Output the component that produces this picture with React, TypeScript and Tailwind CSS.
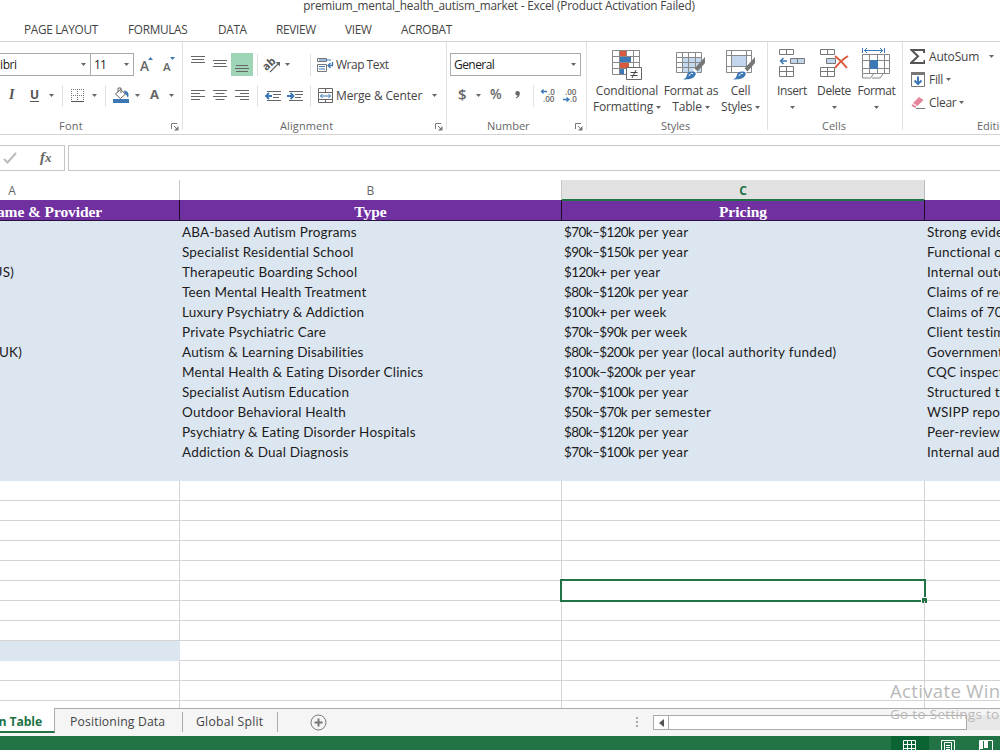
import type { ReactNode } from "react";

type Row = { provider: string; type: string; pricing: string; per: string; evidence: string };

const rows: Row[] = [
  { provider: "", type: "ABA-based Autism Programs", pricing: "$70k–$120k", per: "per year", evidence: "Strong evidence base" },
  { provider: "", type: "Specialist Residential School", pricing: "$90k–$150k", per: "per year", evidence: "Functional outcomes" },
  { provider: "(US)", type: "Therapeutic Boarding School", pricing: "$120k+", per: "per year", evidence: "Internal outcomes" },
  { provider: "", type: "Teen Mental Health Treatment", pricing: "$80k–$120k", per: "per year", evidence: "Claims of recovery" },
  { provider: "", type: "Luxury Psychiatry & Addiction", pricing: "$100k+", per: "per week", evidence: "Claims of 70% success" },
  { provider: "", type: "Private Psychiatric Care", pricing: "$70k–$90k", per: "per week", evidence: "Client testimonials" },
  { provider: "(UK)", type: "Autism & Learning Disabilities", pricing: "$80k–$200k", per: "per year (local authority funded)", evidence: "Government reports" },
  { provider: "", type: "Mental Health & Eating Disorder Clinics", pricing: "$100k–$200k", per: "per year", evidence: "CQC inspections" },
  { provider: "", type: "Specialist Autism Education", pricing: "$70k–$100k", per: "per year", evidence: "Structured teaching" },
  { provider: "", type: "Outdoor Behavioral Health", pricing: "$50k–$70k", per: "per semester", evidence: "WSIPP reports" },
  { provider: "", type: "Psychiatry & Eating Disorder Hospitals", pricing: "$80k–$120k", per: "per year", evidence: "Peer-reviewed" },
  { provider: "", type: "Addiction & Dual Diagnosis", pricing: "$70k–$100k", per: "per year", evidence: "Internal audits" },
];

const blankRows = Array.from({ length: 12 }, (_, i) => i);

const gridCols = "grid grid-cols-[180px_382px_363px_75px]";

function Caret({ className = "" }: { className?: string }) {
  return (
    <svg width="5" height="3" viewBox="0 0 5 3" className={`shrink-0 ${className}`}>
      <path d="M0 0h5L2.5 3z" fill="#666" />
    </svg>
  );
}

function Launcher({ className = "" }: { className?: string }) {
  return (
    <svg width="8" height="8" viewBox="0 0 8 8" className={`shrink-0 ${className}`} fill="none" stroke="#777">
      <path d="M.5 6V.5H6M3 3l3 3" />
      <path d="M7.5 3v4.5H3z" fill="#777" stroke="none" />
    </svg>
  );
}

function Lines({ widths, align = "left", y }: { widths: number[]; align?: "left" | "center" | "right"; y: number }) {
  return (
    <svg width="14" height="23" viewBox="0 0 14 23" className="shrink-0" stroke="#666">
      {widths.map((w, i) => {
        const x = align === "left" ? 0 : align === "center" ? (14 - w) / 2 : 14 - w;
        return <path key={i} d={`M${x} ${y + i * 3 + 0.5}h${w}`} />;
      })}
    </svg>
  );
}

function Separator({ className = "" }: { className?: string }) {
  return <span className={`h-[22px] w-px shrink-0 bg-[#e1e1e1] ${className}`} />;
}

function Indent({ back = false }: { back?: boolean }) {
  return (
    <svg width="17" height="12" viewBox="0 0 17 12" className="shrink-0" fill="none">
      <path d="M2 1.5h14M8 4.5h8M8 7.5h6M2 10.5h14" stroke="#666" />
      <path d={back ? "M1 6h6M4 3L1 6l3 3" : "M0 6h6M3.5 3l3 3-3 3"} stroke="#3b78b5" strokeWidth="1.8" />
    </svg>
  );
}

function Group({ width, label, labelClass = "", launcher = false, children }: { width: string; label: string; labelClass?: string; launcher?: boolean; children: ReactNode }) {
  return (
    <section className={`flex h-[92px] shrink-0 flex-col ${width}`}>
      <div className="flex h-[88px] flex-col border-r border-[#e1e1e1]">
        <div className="h-[78px] shrink-0">{children}</div>
        <div className="flex h-3 shrink-0 items-center text-[11px] text-[#666]">
          <span className={`shrink-0 whitespace-nowrap ${labelClass}`}>{label}</span>
          {launcher && <Launcher className="mt-px mr-[3px] ml-auto" />}
        </div>
      </div>
    </section>
  );
}

function FontGroup() {
  return (
    <Group width="w-[183px]" label="Font" labelClass="ml-[59px] tracking-[0.2px]" launcher>
      <div className="mt-[11px] flex h-[23px] items-center text-[12px]">
        <div className="flex h-[23px] w-[91px] items-center border border-l-0 border-[#ababab] text-[#222]">
          <span className="tracking-[-0.4px]">ibri</span>
          <Caret className="mr-1 ml-auto" />
        </div>
        <div className="flex h-[23px] w-[43px] items-center border border-l-0 border-[#ababab] pl-[3px] text-[#222]">
          <span className="tracking-[-0.8px]">11</span>
          <Caret className="mr-1 ml-auto" />
        </div>
        <svg width="36" height="20" viewBox="0 0 36 20" className="ml-1.5">
          <text x="0" y="16" fontSize="13.5" fontWeight="600" fill="#666">A</text>
          <path d="M8 5l2.5-3L13 5z" fill="#3b78b5" />
          <text x="23" y="16" fontSize="11.5" fontWeight="600" fill="#666">A</text>
          <path d="M30 2h5l-2.5 3z" fill="#3b78b5" />
        </svg>
      </div>
      <div className="mt-2 flex h-[23px] items-center text-[#555]">
        <span className="-mt-0.5 ml-[9px] w-[9px] font-['Liberation_Serif'] text-[14px] font-bold italic">I</span>
        <span className="-mt-0.5 ml-3 w-[9px] text-[12px] font-bold underline underline-offset-2">U</span>
        <Caret className="ml-2.5" />
        <Separator className="ml-2" />
        <svg width="13" height="13" viewBox="0 0 13 13" className="ml-2" fill="none" stroke="#777">
          <path d="M0 .5h13M0 6.5h13M.5 0v13M6.5 0v13M12.5 0v13" strokeDasharray="1 1" />
          <path d="M0 12.5h13" stroke="#555" />
        </svg>
        <Caret className="ml-2" />
        <Separator className="ml-2" />
        <svg width="17" height="17" viewBox="0 0 17 17" className="ml-[7px]" fill="none">
          <path d="M2.5 7l5-4.5 5 4.5-5 4.5z" fill="#fff" stroke="#666" />
          <path d="M5 5V1h3v5" stroke="#666" />
          <path d="M11 3.5c4 .5 5.5 3 4 7.5C14 9 13 7.5 11.5 6z" fill="#3b78b5" />
          <path d="M0 12h16v4H0z" fill="#3b78b5" />
        </svg>
        <Caret className="ml-[5px]" />
        <span className="-mt-0.5 ml-[10px] w-[11px] text-[13px] font-bold text-[#666]">A</span>
        <Caret className="ml-2" />
      </div>
    </Group>
  );
}

function AlignmentGroup() {
  return (
    <Group width="w-[264px]" label="Alignment" labelClass="ml-[97px] tracking-[0.1px]" launcher>
      <div className="mt-[11px] flex h-[23px] items-center">
        <span className="ml-2"><Lines widths={[14, 12, 14]} align="center" y={3} /></span>
        <span className="ml-2"><Lines widths={[14, 12, 14]} align="center" y={7} /></span>
        <span className="ml-1 flex h-[23px] w-[22px] items-center justify-center bg-[#9fd5b7]">
          <Lines widths={[12, 14, 12]} align="center" y={12} />
        </span>
        <Separator className="ml-1" />
        <svg width="18" height="16" viewBox="0 0 18 16" className="ml-[6px] overflow-visible" fill="none">
          <text x="0" y="12" fontSize="11" fontWeight="700" fill="#555" transform="rotate(-42 4 10)">ab</text>
          <path d="M6 15l9-9" stroke="#666" strokeWidth="1.2" />
          <path d="M11.5 5H16v4.5z" fill="#666" />
        </svg>
        <Caret className="ml-[3px]" />
        <Separator className="ml-[20px]" />
        <svg width="17" height="16" viewBox="0 0 17 16" className="ml-[6px]" fill="none">
          <path d="M.5 1.5h9v3h-9zM.5 7.5h9v7h-9z" stroke="#777" />
          <path d="M2 3h12M2 9.5h6M2 12h6" stroke="#3b78b5" />
          <path d="M15.5 5v3.5H11M13.5 6L11 8.5l2.5 2.5" stroke="#3b78b5" strokeWidth="1.3" />
        </svg>
        <span className="ml-[2px] text-[12px] tracking-[-0.5px] whitespace-nowrap text-[#444]">Wrap Text</span>
      </div>
      <div className="mt-2 flex h-[23px] items-center">
        <span className="ml-2"><Lines widths={[14, 9, 14, 9]} y={6} /></span>
        <span className="ml-2"><Lines widths={[14, 9, 14, 9]} align="center" y={6} /></span>
        <span className="ml-2"><Lines widths={[14, 9, 14, 9]} align="right" y={6} /></span>
        <Separator className="ml-2" />
        <span className="ml-[7px]"><Indent back /></span>
        <span className="ml-[5px]"><Indent /></span>
        <Separator className="ml-[6px]" />
        <svg width="15" height="15" viewBox="0 0 15 15" className="ml-[7px]" fill="none">
          <path d="M.5 .5h14v14H.5zM0 4.5h15M0 11.5h15M7.5 0v4M7.5 12v3" stroke="#666" />
          <path d="M2.5 8h10M4.5 6l-2 2 2 2M10.5 6l2 2-2 2" stroke="#3b78b5" />
        </svg>
        <span className="ml-[3px] text-[12px] tracking-[-0.15px] whitespace-nowrap text-[#444]">Merge &amp; Center</span>
        <Caret className="ml-[10px]" />
      </div>
    </Group>
  );
}

function NumberGroup() {
  return (
    <Group width="w-[140px]" label="Number" labelClass="ml-[40px]" launcher>
      <div className="mt-[11px] ml-[3px] flex h-[23px] w-[131px] items-center border border-[#ababab] pl-[3px] text-[12px] tracking-[-0.55px] text-[#222]">
        General
        <Caret className="mr-1 ml-auto" />
      </div>
      <div className="mt-2 flex h-[23px] items-center font-semibold text-[#666]">
        <span className="-mt-0.5 ml-[11px] w-2 text-[15px]">$</span>
        <Caret className="ml-[10px]" />
        <span className="-mt-0.5 ml-[9px] w-[13px] text-[13.5px]">%</span>
        <svg width="5" height="8" viewBox="0 0 5 8" className="-mt-0.5 ml-3">
          <path d="M2.5 0a2.3 2.3 0 0 1 2.3 2.5C4.8 5 3 7 1 7.5V6.5C2 6 2.5 5.3 2.6 4.5A2.2 2.2 0 0 1 2.5 0z" fill="#666" />
        </svg>
        <Separator className="ml-[13px]" />
        <svg width="38" height="16" viewBox="0 0 38 16" className="ml-[6px]" fill="#666" fontSize="8">
          <text x="8" y="6.5">.0</text>
          <text x="3" y="14">.00</text>
          <text x="25" y="6.500">.00</text>
          <text x="30" y="14">.0</text>
          <path d="M7 3.5H1.5M3.5 1.5l-2 2 2 2M23 11.5h6M26.5 9.5l2.500 2-2.500 2" fill="none" stroke="#3b78b5" strokeWidth="1.3" />
        </svg>
      </div>
    </Group>
  );
}

function BigButton({ width, icon, lines, tracking = "tracking-[-0.15px]" }: { width: string; icon: ReactNode; lines: [string, string]; tracking?: string }) {
  return (
    <button type="button" className={`flex shrink-0 flex-col items-center text-[12px] leading-4 whitespace-nowrap text-[#444] ${tracking} ${width}`}>
      <span className="flex h-[34px] items-end">{icon}</span>
      <span className="mt-[3px]">{lines[0]}</span>
      <span className="flex h-4 items-center gap-[3px]">
        {lines[1] && <span>{lines[1]}</span>}
        <Caret />
      </span>
    </button>
  );
}

function Brush() {
  return (
    <>
      <path d="M29 7v6l-7.5 8.5-3-3z" fill="#777" />
      <path d="M18.5 18.5l3 3-2 2-3-3z" fill="#fff" />
      <path d="M16 21.5c3-.5 4.500 1.500 3.500 3.500-2 4-7 4.500-12.500 4.500 3-1 3.500-3 4-5 .5-1.500 2-3 5-3z" fill="#3b78b5" />
      <path d="M13 26c1-2 2-3 4-2.500" stroke="#fff" fill="none" />
    </>
  );
}

function StylesGroup() {
  return (
    <Group width="w-[181px]" label="Styles" labelClass="ml-[74px] tracking-[-0.1px]">
      <div className="flex pt-[4px]">
        <BigButton
          width="ml-1 w-[72px]"
          lines={["Conditional", "Formatting"]}
          icon={
            <svg width="30" height="30" viewBox="0 0 30 30" fill="none">
              <path d="M.5 .5h27v24H.5zM0 6.5h28M0 12.5h28M0 18.5h28M7.5 0v25M14.5 0v25M21.5 0v25" stroke="#888" />
              <path d="M8 1h6v5H8zM8 13h9v5H8z" fill="#d8593b" />
              <path d="M8 7h11v5H8zM8 19h4v5H8z" fill="#3b78b5" />
              <path d="M14.5 17.5h15v12h-15z" fill="#fff" stroke="#666" />
              <path d="M18.5 22.5h7M18.5 25.5h7M24 20l-4 8" stroke="#444" />
            </svg>
          }
        />
        <BigButton
          width="w-[56px]"
          lines={["Format as", "Table"]}
          icon={
            <svg width="30" height="30" viewBox="0 0 30 30" fill="none">
              <path d="M7 8h18v14H7z" fill="#c3d9ee" />
              <path d="M.5 2.5h25v20H.5zM0 7.5h26M0 12.5h26M0 17.5h26M6.5 2v21M12.5 2v21M19.5 2v21" stroke="#888" />
              <Brush />
            </svg>
          }
        />
        <BigButton
          width="w-[43px]"
          lines={["Cell", "Styles"]}
          tracking="tracking-[-0.25px]"
          icon={
            <svg width="30" height="30" viewBox="0 0 30 30" fill="none">
              <path d="M6 6h15v10H6z" fill="#c3d5ec" />
              <path d="M.5 .5h25v22H.5zM0 5.5h26M0 16.5h26M5.5 0v23M20.5 0v23" stroke="#888" />
              <Brush />
            </svg>
          }
        />
      </div>
    </Group>
  );
}

function CellsGroup() {
  return (
    <Group width="w-[135px]" label="Cells" labelClass="ml-[54px]">
      <div className="flex pt-[4px]">
        <BigButton
          width="ml-[3px] w-[42px]"
          lines={["Insert", ""]}
          tracking="tracking-[-0.4px]"
          icon={
            <svg width="27" height="29" viewBox="0 0 27 29" className="mb-0.5" fill="none">
              <path d="M.5 .5h14v5H.5zM7.5 0v6M.5 17.5h14v10H.5zM0 22.5h15M7.5 17v11" stroke="#777" />
              <path d="M11.5 9.5h14v5h-14zM18.5 9v6" fill="#c3d5ec" stroke="#777" />
              <path d="M8 12H1.5M4.5 9l-3 3 3 3" stroke="#3b78b5" strokeWidth="1.5" />
            </svg>
          }
        />
        <BigButton
          width="w-[42px]"
          lines={["Delete", ""]}
          tracking="tracking-[-0.4px]"
          icon={
            <svg width="29" height="29" viewBox="0 0 29 29" className="mb-0.5" fill="none">
              <path d="M.5 .5h14v5H.5zM7.5 0v6M.5 18.5h14v9H.5zM0 22.5h15M7.5 18v10" stroke="#777" />
              <path d="M6.5 9.5h9v5h-9z" fill="#c3d5ec" stroke="#777" />
              <path d="M15 7c4 3 8 7 12 12M28 7c-5 3-9 7-13 12" stroke="#d8593b" strokeWidth="2" />
            </svg>
          }
        />
        <BigButton
          width="w-[43px]"
          lines={["Format", ""]}
          tracking="tracking-[-0.4px]"
          icon={
            <svg width="29" height="32" viewBox="0 0 29 32" fill="none">
              <path d="M.5 6.5h27v19H.5zM0 12.5h28M0 20.5h28M7.5 6v20M15.5 6v20M22.5 6v20M.5 26v4h8l3-4M10 30h8l3-4" stroke="#888" />
              <path d="M8 12h8v9H8z" fill="#3b78b5" />
              <path d="M.5 0v5M22.5 0v5M2 2.5h19M5 0L2.5 2.5 5 5M18 0l2.5 2.5L18 5" stroke="#3b78b5" />
            </svg>
          }
        />
      </div>
    </Group>
  );
}

function EditingGroup() {
  return (
    <Group width="w-[160px]" label="Editing" labelClass="ml-[74px]">
      <div className="flex flex-col pt-[3px] text-[12px] whitespace-nowrap text-[#444]">
        <div className="flex h-[23px] items-center">
          <svg width="15" height="15" viewBox="0 0 15 15" className="ml-[7px]" fill="none">
            <path d="M14 4V1H1.5L8 7.3 1 14h13.5v-3" stroke="#555" strokeWidth="2" />
          </svg>
          <span className="ml-1 tracking-[-0.2px]">AutoSum</span>
          <Caret className="ml-[10px]" />
        </div>
        <div className="flex h-[23px] items-center">
          <svg width="14" height="15" viewBox="0 0 14 15" className="ml-2" fill="none">
            <path d="M.5 .5h13v14H.5z" stroke="#777" />
            <path d="M0 0h14v3H0z" fill="#777" />
            <path d="M7 4.5v8M3.5 8.5L7 12l3.5-3.5" stroke="#3b78b5" strokeWidth="2" />
          </svg>
          <span className="ml-1 tracking-[-0.3px]">Fill</span>
          <Caret className="ml-[3px]" />
        </div>
        <div className="flex h-[23px] items-center">
          <svg width="14" height="14" viewBox="0 0 14 14" className="ml-2" fill="none">
            <path d="M8 1l4.500 3-6 6L2 7z" fill="#e58599" />
            <path d="M1.5 8l4 2.500L4.500 12 .5 10z" fill="#e58599" />
            <path d="M5 12.5h9" stroke="#777" />
          </svg>
          <span className="ml-1 tracking-[-0.3px]">Clear</span>
          <Caret className="ml-[3px]" />
        </div>
      </div>
    </Group>
  );
}

function Ribbon() {
  return (
    <header>
      <div className="flex h-[18px] justify-center overflow-hidden pr-0.5">
        <p className="-mt-[3px] h-4 text-[11.8px] leading-4 tracking-[-0.2px] whitespace-nowrap text-[#444]">
          premium_mental_health_autism_market - Excel (Product Activation Failed)
        </p>
      </div>
      <nav className="flex h-[23px] items-center text-[11.8px] tracking-[-0.3px] whitespace-nowrap text-[#444]">
        <span className="ml-6 w-[104px]">PAGE LAYOUT</span>
        <span className="w-[90px]">FORMULAS</span>
        <span className="w-[58px]">DATA</span>
        <span className="w-[69px]">REVIEW</span>
        <span className="w-[56px]">VIEW</span>
        <span>ACROBAT</span>
      </nav>
      <div className="flex h-[94px] overflow-hidden border-y border-[#d4d4d4]">
        <FontGroup />
        <AlignmentGroup />
        <NumberGroup />
        <StylesGroup />
        <CellsGroup />
        <EditingGroup />
      </div>
    </header>
  );
}

function FormulaBar() {
  return (
    <div className="flex h-[45px] gap-[3px] pt-[10px]">
      <div className="flex h-[26px] w-[65px] items-center border border-l-0 border-[#c6c6c6]">
        <svg width="14" height="12" viewBox="0 0 14 12" className="ml-[3px]" fill="none">
          <path d="M1 7l3.5 3.5L13 1" stroke="#bbb" strokeWidth="2" />
        </svg>
        <span className="-mt-0.5 ml-[23px] font-['Liberation_Serif'] text-[15px] font-bold text-[#666] italic">
          f<span className="text-[13px]">x</span>
        </span>
      </div>
      <div className="h-[26px] flex-1 border border-r-0 border-[#c6c6c6]" />
    </div>
  );
}

function Sheet() {
  return (
    <main className="relative h-[528px] overflow-hidden">
      <div className={`${gridCols} h-5 text-center text-[12px] leading-[21px] text-[#666]`}>
        <span className="border-r border-[#c8c8c8] pr-[155px] text-center">A</span>
        <span className="border-r border-[#c8c8c8]">B</span>
        <span className="h-[21px] border-r border-b-2 border-r-[#bbb] border-b-[#217346] bg-[#e1e1e1] font-bold text-[#217346]">C</span>
        <span />
      </div>
      <div className={`${gridCols} h-[21px] border-b border-[#2c1140] bg-[#7030a0] text-center font-['Liberation_Serif'] text-[15.5px] leading-[24px] font-bold whitespace-nowrap text-white`}>
        <span className="flex h-5 justify-end border-r border-[#1c0a29] pr-[77px] tracking-[-0.1px]">Program Name &amp; Provider</span>
        <span className="h-5 border-r border-[#1c0a29]">Type</span>
        <span className="h-5 border-r border-[#1c0a29]">Pricing</span>
        <span />
      </div>
      <div className="h-[260px] bg-[#dce6f1] font-['Lato','Open_Sans',sans-serif] text-[13.5px] leading-[22px] tracking-[0.18px] whitespace-nowrap text-[#1c1c1c]">
        {rows.map((row) => (
          <div key={row.type} className={`${gridCols} h-5`}>
            <span className={`flex justify-end ${row.provider === "(UK)" ? "pr-[158px]" : "pr-[166px]"}`}>{row.provider}</span>
            <span className="pl-0.5">{row.type}</span>
            <span className="pl-0.5 tracking-[0.3px]">
              <span className="tracking-[-0.6px]">{row.pricing}</span> {row.per}
            </span>
            <span className="pl-0.5">{row.evidence}</span>
          </div>
        ))}
      </div>
      {blankRows.map((i) => (
        <div key={i} className={`${gridCols} h-5`}>
          <span className={`border-r border-b ${i === 8 ? "border-[#dce6f1] bg-[#dce6f1]" : "border-[#d4d4d4]"}`} />
          <span className="border-r border-b border-[#d4d4d4]" />
          <span className="relative border-r border-b border-[#d4d4d4]">
            {i === 5 && (
              <span className="absolute -top-0.5 -right-0.5 -bottom-0.5 -left-0.5 border-2 border-[#217346]">
                <span className="absolute -right-[3px] -bottom-[3px] h-1.5 w-1.5 border-t border-l border-white bg-[#217346]" />
              </span>
            )}
          </span>
          <span className="border-b border-[#d4d4d4]" />
        </div>
      ))}
    </main>
  );
}

function SheetTabs() {
  return (
    <div className="flex h-7 border-t border-[#ababab] bg-[#f5f5f5] text-[12.2px] whitespace-nowrap text-[#444]">
      <div className="-mt-px flex h-[25px] w-[55px] items-center justify-end overflow-hidden border-r border-b-2 border-r-[#ababab] border-b-[#217346] bg-white pt-[5px] pr-3 font-bold tracking-[-0.1px] text-[#217346]">
        <span>Comparison Table</span>
      </div>
      <span className="mt-[3px] h-5 w-[128px] border-r border-[#ababab] pl-[15px] leading-5 tracking-[0.15px]">Positioning Data</span>
      <span className="mt-[3px] h-5 w-[95px] border-r border-[#ababab] pl-[13px] leading-5 tracking-[0.25px]">Global Split</span>
      <svg width="17" height="17" viewBox="0 0 17 17" className="mt-[5px] ml-8" fill="none" stroke="#777">
        <circle cx="8.5" cy="8.5" r="7.5" />
        <path d="M8.5 4.5v8M4.5 8.5h8" strokeWidth="2" />
      </svg>
      <svg width="3" height="12" viewBox="0 0 3 12" className="mt-2 ml-[309px]" fill="#aaa">
        <path d="M0 0h2v2H0zM0 4h2v2H0zM0 8h2v2H0z" />
      </svg>
      <div className="mt-1.5 ml-[14px] flex h-[15px] flex-1 bg-[#e8e8e8]">
        <span className="flex w-4 items-center justify-center border border-[#ababab] bg-white">
          <svg width="5" height="8" viewBox="0 0 5 8"><path d="M5 0v8L0 4z" fill="#555" /></svg>
        </span>
        <span className="w-[298px] border border-l-0 border-[#ababab] bg-white" />
      </div>
    </div>
  );
}

function StatusBar() {
  return (
    <footer className="flex h-[14px] overflow-hidden bg-[#217346]">
      <span className="ml-[891px] flex w-[38px] justify-center bg-[#0a6332] pt-1 pr-0.5">
        <svg width="13" height="13" viewBox="0 0 13 13" className="shrink-0" fill="none" stroke="#fff">
          <path d="M.5 .5h12v12H.5zM4.5 0v13M8.5 0v13M0 4.5h13M0 8.5h13" />
        </svg>
      </span>
      <svg width="14" height="13" viewBox="0 0 14 13" className="mt-1 ml-3 shrink-0" fill="none" stroke="#fff">
        <path d="M.5 14V.5h13V14M3.5 14V2.5h7V14M5 5.5h4M5 7.5h4M5 9.5h4" />
      </svg>
      <svg width="14" height="13" viewBox="0 0 14 13" className="mt-1 ml-6 shrink-0" fill="none" stroke="#fff">
        <path d="M.5 14V.5h13V14" />
        <path d="M1 1h3v8H1zM5 1h4v7H5z" fill="#fff" stroke="none" />
      </svg>
    </footer>
  );
}

export default function App() {
  return (
    <div className="relative h-[750px] w-[1000px] overflow-hidden bg-white font-['Open_Sans','Noto_Sans',sans-serif]">
      <Ribbon />
      <FormulaBar />
      <Sheet />
      <SheetTabs />
      <StatusBar />
      <div className="pointer-events-none absolute top-[679px] left-[890px] whitespace-nowrap text-[#b9b9b9]">
        <p className="text-[18.5px] leading-[24px] tracking-[0.35px]">Activate Windows</p>
        <p className="text-[13.5px] leading-[22px] tracking-[0.3px]">Go to Settings to activate Windows.</p>
      </div>
    </div>
  );
}
